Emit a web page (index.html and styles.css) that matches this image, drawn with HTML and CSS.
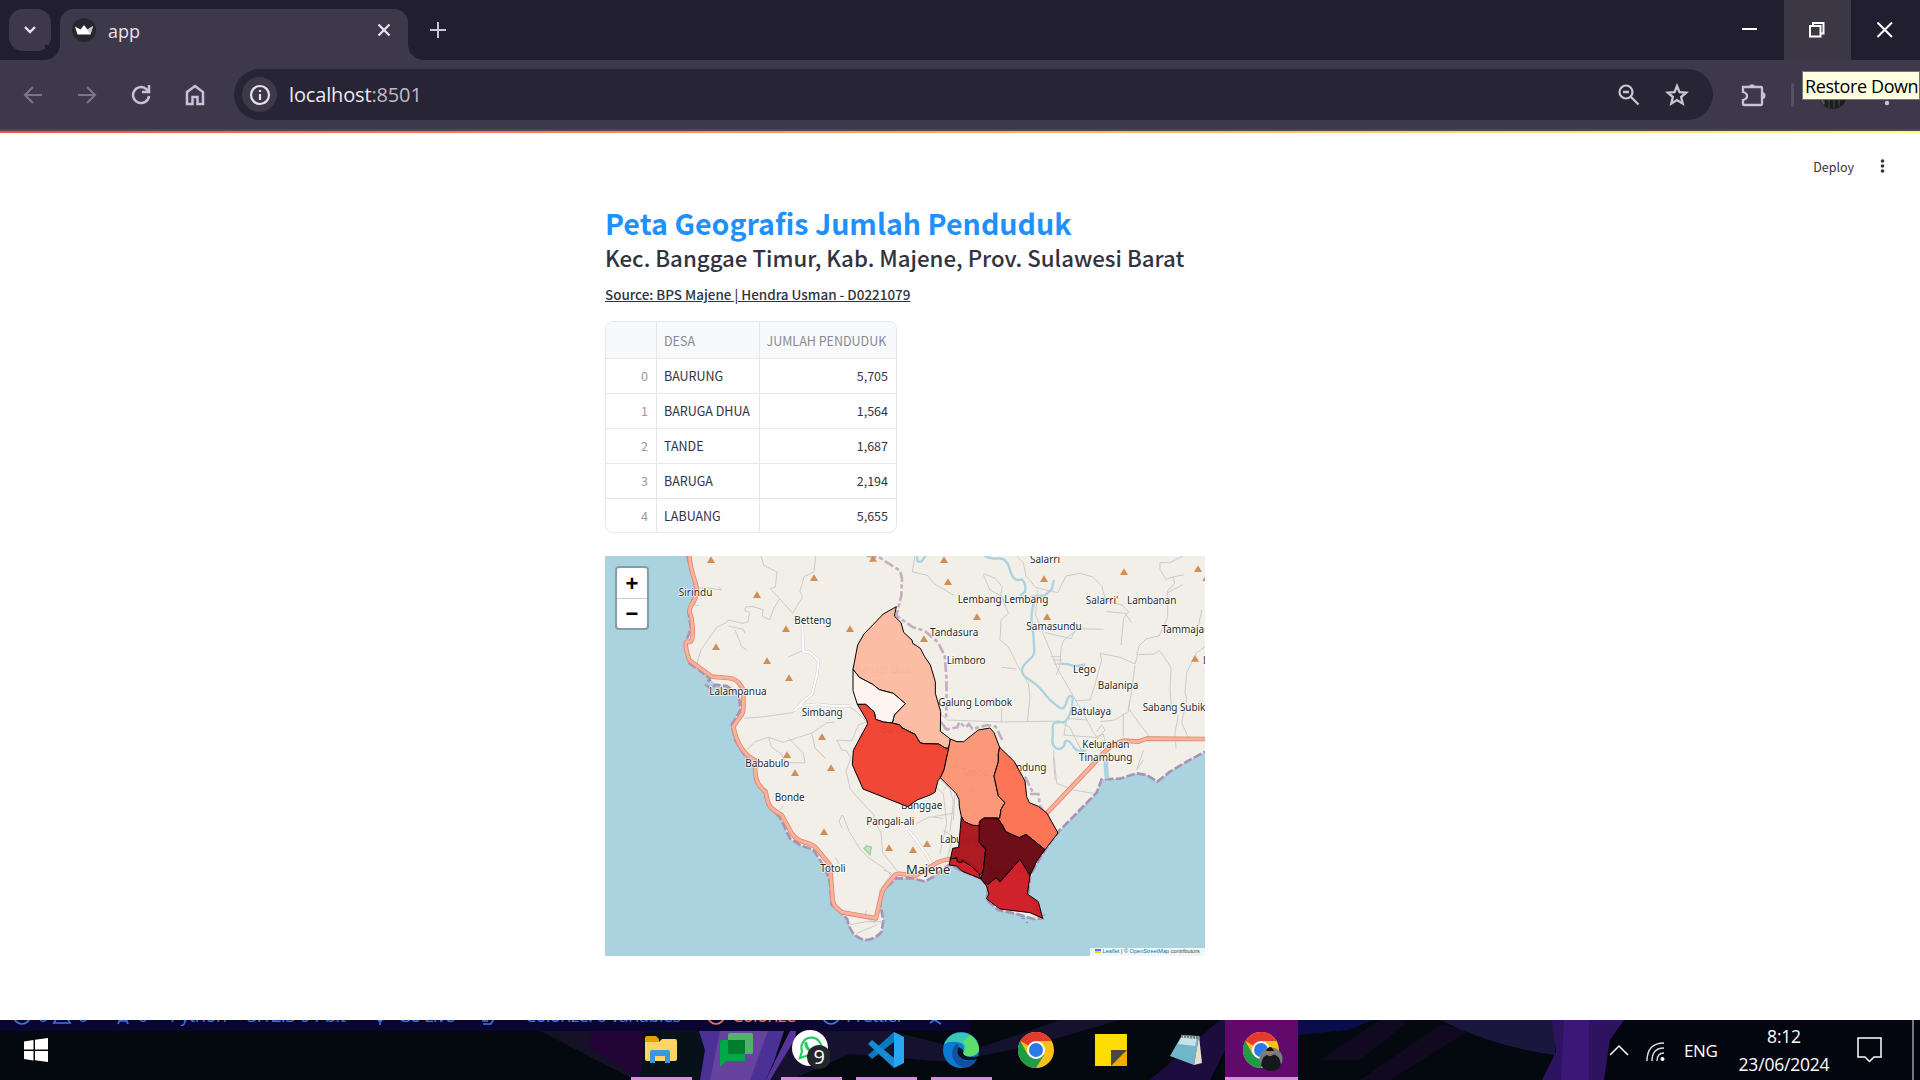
FILE: index.html
```html
<!DOCTYPE html>
<html lang="id">
<head>
<meta charset="utf-8">
<title>app</title>
<link rel="stylesheet" href="styles.css">
</head>
<body>
<header class="tabbar">
  <div class="tab-search"><svg width="14" height="10" viewBox="0 0 14 10"><path d="M2 2l5 5 5-5" fill="none" stroke="#e8e1ee" stroke-width="2.4"/></svg></div>
  <div class="tab">
    <svg class="favicon" width="24" height="24" viewBox="0 0 24 24"><circle cx="12" cy="12" r="12" fill="#26272e"/><path d="M3 8.5l5.500 3L12 7l3.500 4.500L21 8l-2.500 8.500H5.500z" fill="#fff"/><path d="M12 7l3.500 4.500L21 8l-2.500 8.500z" fill="#c8c8c8"/></svg>
    <span class="tab-title">app</span>
    <svg width="14" height="14" viewBox="0 0 14 14"><path d="M1.500 1.500l11 11m0-11l-11 11" stroke="#eae4f0" stroke-width="2.2"/></svg>
  </div>
  <svg class="new-tab" width="16" height="16" viewBox="0 0 16 16"><path d="M8 0v16M0 8h16" stroke="#cbc3dc" stroke-width="2"/></svg>
  <div class="window-buttons">
    <div class="window-button"><svg width="16" height="16" viewBox="0 0 16 16"><path d="M0 7h15" stroke="#fff" stroke-width="2"/></svg></div>
    <div class="window-button hovered"><svg width="16" height="16" viewBox="0 0 16 16"><path d="M1 4h10.500v10.500H1zM4 4V1h10.500v10.500h-3" fill="none" stroke="#fff" stroke-width="2"/></svg></div>
    <div class="window-button"><svg width="16" height="16" viewBox="0 0 16 16"><path d="M.5.500l14.500 14.500m0-14.500L.5 15" stroke="#fff" stroke-width="2"/></svg></div>
  </div>
</header>
<nav class="toolbar">
  <div class="nav-icons">
    <svg width="20" height="20" viewBox="0 0 20 20"><path class="dim" d="M19 10H2m8-8l-8 8 8 8"/></svg>
    <svg width="20" height="20" viewBox="0 0 20 20"><path class="dim" d="M1 10h17m-8-8l8 8-8 8"/></svg>
    <svg width="20" height="20" viewBox="0 0 20 20"><path class="lit" d="M18 11a8 8 0 1 1-2.300-6.600L18 6.500M18 0v7h-7"/></svg>
    <svg width="20" height="22" viewBox="0 0 20 22"><path class="lit" d="M2 8l8-6 8 6v12h-5.500v-7h-5v7H2z"/></svg>
  </div>
  <div class="omnibox">
    <div class="site-info"><svg width="22" height="22" viewBox="0 0 22 22"><circle cx="11" cy="11" r="9" fill="none" stroke="#e7e1ee" stroke-width="2.200"/><path d="M11 10v6M11 6v2" stroke="#e7e1ee" stroke-width="2.200"/></svg></div>
    <div class="url">localhost<span>:8501</span></div>
    <svg class="zoom-icon" width="22" height="22" viewBox="0 0 22 22"><path d="M5 8h6M12.500 12.500l8 8" fill="none" stroke="#cbc5cf" stroke-width="2.300"/><circle cx="8" cy="8" r="6.500" fill="none" stroke="#cbc5cf" stroke-width="2.200"/></svg>
    <svg width="24" height="24" viewBox="0 0 24 24"><path d="M12 3l2.500 6.200 6.700.5-5.100 4.300 1.600 6.600-5.700-3.600-5.700 3.600 1.600-6.600-5.100-4.300 6.700-.5z" fill="none" stroke="#cbc5cf" stroke-width="2.300"/></svg>
  </div>
  <svg class="puzzle" width="26" height="26" viewBox="0 0 26 26"><path d="M3 5h18q1 0 1 1v16q0 1-1 1H4q-1 0-1-1v-4q4-1 4-4t-4-4z" fill="none" stroke="#c9c0dc" stroke-width="2.300"/><path d="M9 4a3.500 3.500 0 0 1 6 0zM22 10a3.500 3.500 0 0 1 0 7z" fill="#c9c0dc"/></svg>
  <i class="divider"></i>
  <svg class="avatar" width="28" height="28" viewBox="0 0 28 28"><circle cx="14" cy="14" r="14" fill="#1c1f1e"/><path d="M5 17v7M10 17v10M15 17v10M20 17v8" stroke="#3f4744" stroke-width="1.200"/><path d="M1 16l4 7" stroke="#566048" stroke-width="2"/></svg>
  <svg class="menu-dots" width="6" height="22" viewBox="0 0 6 22"><g fill="#cbc3dc"><circle cx="3" cy="3" r="2.200"/><circle cx="3" cy="11" r="2.200"/><circle cx="3" cy="19" r="2.200"/></g></svg>
  <div class="tooltip">Restore Down</div>
</nav>
<main class="app">
  <div class="app-actions"><span>Deploy</span><svg width="5" height="14" viewBox="0 0 5 14"><g fill="#31333f"><circle cx="2.500" cy="2" r="1.800"/><circle cx="2.500" cy="7" r="1.800"/><circle cx="2.500" cy="12" r="1.800"/></g></svg></div>
  <section class="content">
    <h1>Peta Geografis Jumlah Penduduk</h1>
    <h2>Kec. Banggae Timur, Kab. Majene, Prov. Sulawesi Barat</h2>
    <p class="source">Source: BPS Majene | Hendra Usman - D0221079</p>
    <div class="table-frame"><table>
      <tr><th></th><th>DESA</th><th>JUMLAH PENDUDUK</th></tr>
      <tr><td>0</td><td>BAURUNG</td><td>5,705</td></tr>
      <tr><td>1</td><td>BARUGA DHUA</td><td>1,564</td></tr>
      <tr><td>2</td><td>TANDE</td><td>1,687</td></tr>
      <tr><td>3</td><td>BARUGA</td><td>2,194</td></tr>
      <tr><td>4</td><td>LABUANG</td><td>5,655</td></tr>
    </table></div>
    <div class="map">
      <svg width="600" height="400" viewBox="15 18 1800 1200">
        <defs>
          <path id="peak" d="M0-11L12 9H-12z" fill="#d08f55"/>
          <path id="coast" d="M262 18L272 60 285 100 278 150 265 185 273 235 258 275 262 320 268 340 300 362 330 385 318 405 335 418 345 404 380 408 415 430 422 480 395 525 405 570 430 610 466 655 468 695 490 720 505 768 540 802 570 866 600 885 640 900 676 955 690 1000 695 1065 725 1090 742 1108Q748 1140 765 1155T800 1170Q830 1165 845 1145L850 1110 840 1060 850 1020 890 985 940 985 975 995 1000 980 1050 942 1080 960 1140 985 1165 1010 1160 1050 1195 1080 1250 1092 1300 1107 1327 1105 1285 1035 1290 975 1335 900 1375 845 1420 800 1490 728 1505 688 1560 686 1610 670 1640 675 1672 695 1710 665 1760 635 1815 605"/>
          <path id="trunk" d="M268 18Q270 40 275 60T288 105 280 155 270 190 278 240 264 275 268 330L335 380 385 384Q405 386 415 397T430 420V475Q430 490 420 502T400 530Q408 570 425 595T466 632Q464 670 470 690T497 725Q503 765 515 775T545 795L575 850Q585 865 600 872L630 882Q640 886 650 896L690 945 698 1050Q700 1065 712 1075T725 1087L828 1105 845 1030Q850 1015 860 1005L885 975Q890 970 905 972L945 978 1000 945Q1020 930 1055 927M1340 790L1430 695 1520 600Q1540 580 1570 572L1615 575 1640 566 1815 567"/>
        </defs>
        <rect x="15" y="18" width="1800" height="1200" fill="#aad3df"/>
        <path d="M262 18L272 60 285 100 278 150 265 185 273 235 258 275 262 320 268 340 300 362 330 385 345 404 380 408 415 430 422 480 395 525 405 570 430 610 466 655 468 695 490 720 505 768 540 802 570 866 600 885 640 900 676 955 690 1000 695 1065 725 1090 742 1108Q748 1140 765 1155T800 1170Q830 1165 845 1145L850 1110 840 1060 850 1020 890 985 940 985 975 995 1000 980 1050 942 1080 960 1140 985 1165 1010 1160 1050 1195 1080 1250 1092 1300 1107 1327 1105 1285 1035 1290 975 1335 900 1375 845 1420 800 1490 728 1505 688 1560 686 1610 670 1640 675 1672 695 1710 665 1760 635 1815 605V18z" fill="#f2efe9"/>
        <use href="#coast" fill="none" stroke="#a993b4" stroke-width="8" stroke-dasharray="26 7"/>
        <g class="lanes">
          <path d="M483 18l8 28 40 20-5 45-15 5 28 30-18 30-12 33-22-10 2-20-30-9-22 0-3 12 15 5-5 28-15 5-45-10-5 8-28 13-35 50-13 18-11 37 3 40 25 30M538 145l40 45 30-50-8-15 12-45 30-15 5-45 10-12M290 115l35-1 40 6-10-10M290 140l-7 25 15 2M385 228l45 10 5 12M405 240l10 25 10 25 15 10M605 303l-40 18M433 505l60-5 85-12 25-22M440 600l25-25 40-13 45 15 85-28 45-30 25-3M635 549l10 45 30 30M505 562l10 30 30 20 10 25 60 2-5-30-30-30-15-15M740 465l30 20 30 30-25 10-20 48-45-3 15 30 15 3 13 20-15 40 13 55 45 50 25 25 2 20 20 35 5 60 60 75M725 795l-8 20 10 20M728 795l20 50 30 50 30 30 45 30 30 30M540 780l10-14M706 922l12 20M850 960l25 10-35 50-10 85M800 1080l-8 20 35 20M745 1125l55-10 50 0M770 1150l60-25"/>
          <path d="M945 18l-8 48 45 10 20 25 60 35M1150 75l20 45 37 20 10 30M1250 18l20 20 8 40 30 35 65 15 25-50 40-8 40 10 28 30 10 40 50 15 20 20-15 20-8 80M1312 120l-5 75 20 50 25 60 20 50 55 95 50 90M1205 140l20 50-22 20-3 60 25 20 30 60 30 50 5 40-8 75M1150 70l35 15 22 25-5 27M1335 248l78 18 15-30 82 2M1430 240l-38 30-8 20-5 60-10 25M1352 320h30M1360 330h28M1362 342h20M1500 310l60 12 45 20 8-28 50-2 15-10 15 20 20 30-3 70 5 55 20 20-10 50 3 50M1605 345l-10 80-10 50 25 35 35 45 5 15M1500 310l5 20-25 90-10 30-45 2M1520 185l55 5 20 28M1400 505l60 5M1400 505l-8 50 100 8M1750 18l-40 20 -30 0 0 20 18 30 22-8M1720 80l3 22-20 20 0 80-25 55-40 10-20 20-8 28M1700 130l50-27M1720 80l30-5M1805 180l-10 50M1815 290l-25 18-15 30-15 30-5 60 5 20-15 70 20 45M1040 510l170 6 170-3 30 20 50 100M1020 490l20 18M1205 516v-40M1205 352l45 5M1360 600l10 100 50 20 60 10M1630 600l-20 60 20-30M1570 490v70M1500 600l30 30 70 0M1360 620l5 70M1590 450l-5 35-40 25-45 5"/>
          <path d="M1020 690l30 25 10 40-10 90M1030 720l15-15 20 15-5 90M990 700l40 30 10 90-20 90M1000 800l60-10M950 820l40-20 40 5M1030 840l30 20-20 70M1475 540l15 20 20-8 5 20-35 8M1490 545l15-20 10 15-25 30"/>
        </g>
        <g class="streets"><path d="M607 223l3 82 18 0 28 28-5 40-15 60-25 20-28 30M583 483l15-15 55-5 45 5h50M925 840l20 25 35 50 20 35" stroke="#ccc" stroke-width="9"/><path d="M607 223l3 82 18 0 28 28-5 40-15 60-25 20-28 30M583 483l15-15 55-5 45 5h50M925 840l20 25 35 50 20 35" stroke="#fff" stroke-width="6"/></g>
        <g class="rivers"><path d="M950 18l4 17 10 0 12-17M1155 18Q1170 28 1195 25T1230 60 1265 88Q1280 100 1275 125L1262 137M1307 140Q1290 190 1296 225T1303 300C1305 330 1270 330 1266 360 1264 385 1300 390 1320 415L1350 450C1380 475 1390 490 1400 455 1405 430 1420 435 1418 450 1416 475 1412 500 1395 515 1375 520 1360 510 1358 530 1362 560 1350 580 1365 592 1380 605 1395 590 1395 575 1400 565 1415 580 1420 590L1430 601 1455 602"/><path d="M1452 344Q1425 352 1405 343L1385 341M1295 140l40-4 20-18 6-25"/><path d="M1517 635l3 45" stroke-width="14"/></g>
        <g class="border"><path d="M800 18l38 4 30 20 32 20 6 25-2 50-15 60 50 35 35 10 40 35 20 40 5 60 1 80-2 50"/><path d="M1022 515l15 20-5 5 40-8 5-15 20 15 10-10 10 15 45-12 25 5 20 40M1275 680l25 50M1290 732h25l5 35 20 30"/></g>
        <path d="M792 895l8-8 14 4-2 10-2 14-8-10z" fill="#c8e0c2" stroke="#9cd09c" stroke-width="4"/>
        <use class="highway-case" href="#trunk"/><use class="highway" href="#trunk"/>
        <g class="peaks">
          <use href="#peak" x="333" y="30"/><use href="#peak" x="471" y="135"/><use href="#peak" x="642" y="84"/><use href="#peak" x="819" y="26"/><use href="#peak" x="558" y="237"/><use href="#peak" x="750" y="237"/><use href="#peak" x="348" y="291"/><use href="#peak" x="501" y="333"/><use href="#peak" x="567" y="384"/><use href="#peak" x="666" y="561"/><use href="#peak" x="561" y="615"/><use href="#peak" x="585" y="669"/><use href="#peak" x="693" y="654"/><use href="#peak" x="672" y="846"/><use href="#peak" x="867" y="894"/><use href="#peak" x="939" y="900"/><use href="#peak" x="981" y="882"/><use href="#peak" x="1032" y="30"/><use href="#peak" x="1044" y="96"/><use href="#peak" x="1131" y="201"/><use href="#peak" x="1332" y="87"/><use href="#peak" x="1341" y="201"/><use href="#peak" x="1572" y="66"/><use href="#peak" x="1794" y="57"/><use href="#peak" x="1785" y="326"/><use href="#peak" x="972" y="267"/><use href="#peak" x="1819" y="84"/><use href="#peak" x="1068" y="648"/><use href="#peak" x="1116" y="720"/><use href="#peak" x="1125" y="794"/><use href="#peak" x="1182" y="778"/>
        </g>
        <g class="labels">
          <text x="236" y="139" textLength="101">Sirindu</text><text x="583" y="223" textLength="111">Betteng</text><text x="328" y="436" textLength="172">Lalampanua</text><text x="605" y="497" textLength="123">Simbang</text><text x="436" y="652" textLength="132">Bababulo</text><text x="524" y="753" textLength="90">Bonde</text><text x="799" y="826" textLength="144">Pangali-ali</text><text x="661" y="966" textLength="76">Totoli</text><text x="903" y="777" textLength="124">Banggae</text><text x="1020" y="880" textLength="118">Labuang</text><text x="1168" y="973" textLength="127">Baurung</text><text x="1083" y="679" textLength="82">Tande</text><text x="1218" y="662" textLength="121">Tandung</text><text x="842" y="548" textLength="100">Baruga</text><text x="765" y="370" textLength="165">Baruga Dua</text>
          <text x="1290" y="40" textLength="90">Salarri</text><text x="1073" y="158" textLength="272">Lembang Lembang</text><text x="1457" y="163" textLength="98">Salarri'</text><text x="1581" y="163" textLength="148">Lambanan</text><text x="1279" y="239" textLength="166">Samasundu</text><text x="990" y="259" textLength="145">Tandasura</text><text x="1040" y="342" textLength="117">Limboro</text><text x="1419" y="369" textLength="69">Lego</text><text x="1493" y="417" textLength="122">Balanipa</text><text x="1015" y="467" textLength="221">Galung Lombok</text><text x="1412" y="495" textLength="121">Batulaya</text><text x="1628" y="482" textLength="188">Sabang Subik</text><text x="1685" y="248" textLength="127">Tammaja</text><text x="1447" y="595" textLength="141">Kelurahan</text><text x="1437" y="634" textLength="160">Tinambung</text><text x="1809" y="342">L</text>
          <text class="town" x="918" y="971" textLength="133">Majene</text>
        </g>
        <g class="regions" transform="translate(660 120)">
          <path fill="#fcbba1" d="M229 50L190 72 132 132 113 165 99 238 118 262 158 283 178 299 220 310 256 341 223 375 217 399 240 405 245 413 285 433 300 458 312 461 356 462 375 474 386 475 391 447 361 424 362 365 346 310 346 275 331 225 314 200 301 175 278 160 276 150 251 127 243 98 223 78z"/>
          <path fill="#fff5f0" d="M99 238L118 262 158 283 178 299 220 310 256 341 223 375 217 399 190 396 167 388 163 366 137 343 112 343 99 302z"/>
          <path fill="#f14130" d="M112 343L137 343 163 366 167 388 190 396 217 399 240 405 245 413 285 433 300 458 312 461 356 462 375 474 386 475 372 540 361 563 354 572 345 607 330 615 291 630 263 650 129 597 97 524 100 481 143 401 140 390z"/>
          <path fill="#fc9576" d="M391 447L411 455 431 455 475 420 510 414 522 428 539 472 535 490 535 515 522 558 535 618 555 638 543 658 539 685 527 684 492 684 480 692 477 707 458 706 433 695 424 680 418 650 417 628 408 610 361 563 372 540 386 475z"/>
          <path fill="#fb7151" d="M539 472L583 515 615 573 620 620 628 638 655 649 681 670 714 729 675 779 618 733 598 743 560 731 548 705 527 684 539 685 543 658 555 638 535 618 522 558 535 515 535 490z"/>
          <path fill="#cc1b23" d="M388 825L391 805 408 805 410 803 425 806 450 815 474 838 482 866 425 843 410 828z"/>
          <path fill="#ac141b" d="M424 680L433 695 458 706 478 707 478 757 497 778 490 840 480 856 465 838 450 826 426 811 425 818 412 815 410 803 391 808 398 775 416 772z"/>
          <path fill="#690612" d="M492 684L527 684 538 690 556 724 598 743 618 733 675 779 650 814 630 857 600 808 540 876 529 863 499 887 482 866 490 840 497 778 478 757 478 696z"/>
          <path fill="#ce1b24" d="M600 808L630 857 622 912 655 935 668 985 630 968 540 957 499 926 507 912 499 887 529 863 540 876z"/>
        </g>
        <path d="M1263 1105h12M1278 1117h6M1330 1095h6M325 391h8" stroke="#3b9cf0" stroke-width="3"/>
      </svg>
      <div class="zoom-control"><span>+</span><span>−</span></div>
      <div class="attribution"><svg width="6" height="4" viewBox="0 0 6 4"><path fill="#4c7be1" d="M0 0h6v2H0z"/><path fill="#ffd500" d="M0 2h6v2H0z"/></svg> <a>Leaflet</a> | © <a>OpenStreetMap</a> contributors</div>
    </div>
  </section>
</main>
<footer class="taskbar">
  <svg class="wallpaper" width="1920" height="60" viewBox="0 0 1920 60" preserveAspectRatio="none">
    <rect width="1920" height="60" fill="#040910"/>
    <path d="M540 11h160v18l-35 31h-30z" fill="#141026"/><path d="M590 11h110v49h-58l-20-12-32-20z" fill="#220536"/><path d="M645 11h60v49h-65z" fill="#07111a"/>
    <path d="M699 11h85l-10 30-8 19h-66l5-30z" fill="#4b3196"/><path d="M720 11h48l-18 49h-40z" fill="#65439f"/><path d="M796 11h-6l-12 24-12 25h15l12-20z" fill="#56349a"/>
    <path d="M800 11h90l80 20 90-31h60l-90 26-80 16-100-8-60 26h-20z" fill="#15112e"/><path d="M1220 0l-70 60h60l15-30V0z" fill="#1d0c3e"/><path d="M1298 0h75l-25 10-50 5z" fill="#0b0c4b"/>
    <path d="M1380 0l-60 40h40l50-40zM1440 5l-80 55h30l80-50z" fill="#10091f"/><path d="M1440 0h115v35q-60-8-115-35z" fill="#1a173f"/><path d="M1552 0h74l-16 20-6 40h-62l14-28z" fill="#2d1360"/><path d="M1564 0h25v60h-28z" fill="#3b1878"/>
    <path d="M1624 0h296v60h-315l5-40z" fill="#03060f"/>
  </svg>
  <div class="statusbar">
    <svg width="971" height="11" viewBox="0 0 971 11"><rect width="971" height="11" fill="#0b0532"/><g fill="none" stroke="#3978df" stroke-width="1.700"><circle cx="22" cy="-4" r="8"/><path d="M54 3l8-14 8 14zM118 4l5-12 5 12M119 1h8M380-8v13M377-2l3 4 4-4M483 4h8l4-7M482 1l6 0"/><circle cx="831" cy="-4" r="8"/><path d="M930 3l12-9M933-1l8 5"/></g><circle cx="716" cy="-4" r="8" fill="none" stroke="#ee7064" stroke-width="1.700"/>
      <g class="status-text"><text x="38" y="2">0</text><text x="78" y="2">0</text><text x="138" y="2">0</text><text x="170" y="2" textLength="57">Python</text><text x="247" y="2" textLength="99">3.12.3 64-bit</text><text x="398" y="2" textLength="57">Go Live</text><text x="525" y="2" textLength="156">Colorize: 0 variables</text><text class="warm" x="732" y="2" textLength="64">Colorize</text><text x="846" y="2" textLength="58">Prettier</text></g>
    </svg>
  </div>
  <svg class="start" width="24" height="24" viewBox="0 0 24 24"><path d="M0 3.500L9.500 2v9.500H0zM11 1.800L24 0v11.500H11zM0 13h9.500v9.500L0 21zM11 13h13v11l-13-1.800z" fill="#fff"/></svg>
  <div class="tasks">
    <div class="task open"><svg width="32" height="28" viewBox="0 0 32 28"><path d="M0 2q0-2 2-2h9l3 3v4H0z" fill="#e1a100"/><path d="M0 6l14 0 3-3h13q2 0 2 2v18q0 2-2 2H2q-2 0-2-2z" fill="#ffd463"/><path d="M5 27V16q0-2 2-2h16q2 0 2 2v11h-5v-7H10v7z" fill="#3a99dd"/></svg></div>
    <div class="task"><svg width="34" height="34" viewBox="0 0 34 34"><rect x="9" width="25" height="21" rx="2" fill="#55b06d"/><path d="M1 9q0-2 2-2h23v21H7l-6 6z" fill="#00a846"/><path d="M9 7h17v14H11q-2 0-2-2z" fill="#007f2e"/></svg></div>
    <div class="task open"><svg width="38" height="40" viewBox="0 0 38 40"><circle cx="18" cy="18" r="18" fill="#fff"/><path d="M8 28l2-7a10 10 0 1 1 4 5z" fill="none" stroke="#23cf63" stroke-width="2.200"/><path d="M14 12q-1 8 9 10" stroke="#23cf63" stroke-width="3" fill="none"/><circle cx="27" cy="27" r="12" fill="#25262b"/><text x="21.500" y="34" class="badge">9</text></svg></div>
    <div class="task open"><svg width="36" height="36" viewBox="0 0 36 36"><path d="M26 0v10L4 27l-4-4z" fill="#0a78bd"/><path d="M0 12l4-4 22 18v10z" fill="#168bd4"/><path d="M26 0l10 5v26l-10 5z" fill="#25a7f2"/></svg></div>
    <div class="task open"><svg width="36" height="36" viewBox="0 0 36 36"><circle cx="18" cy="18" r="18" fill="#087bd0"/><path d="M1 13C5-2 26-4 34 9q5 12-5 15-8 1-9-3 4-10-6-11T1 13z" fill="#3bc6b8"/><path d="M27 3q10 8 9 16-3 7-15 5l-1-3q6-6 0-11z" fill="#5ddd69"/><path d="M13 12q-9 12 3 22 12 5 18-7-10 5-17-2-5-6-1-12z" fill="#11509f"/><path d="M15 15q-3 10 8 13 7 1 11-1l2-3q-14 3-16-3 2-4-5-6z" fill="#061421"/></svg></div>
    <div class="task"><svg width="36" height="36" viewBox="0 0 36 36"><g id="chrome"><circle cx="18" cy="18" r="18" fill="#fbc116"/><path d="M2.400 9A18 18 0 0 1 33.600 9H18z" fill="#e33b2e"/><path d="M2.400 9A18 18 0 0 0 18 36l8-13-16 0z" fill="#229b48"/><path d="M2.400 9H18v9z" fill="#e33b2e"/><circle cx="18" cy="18" r="9" fill="#fff"/><circle cx="18" cy="18" r="7" fill="#287be9"/></g></svg></div>
    <div class="task"><svg width="32" height="32" viewBox="0 0 32 32"><path d="M0 0h32v16L16 32H0z" fill="#ffdd00"/><path d="M16 32V16h16z" fill="#484848"/><path d="M32 16v16H16z" fill="#f4aa00"/></svg></div>
    <div class="task"><svg width="34" height="32" viewBox="0 0 34 32"><path d="M13 1l17 1-5 29L1 22z" fill="#6fb6c8"/><path d="M13 2l15 1-2 9-17-2z" fill="#c6e3e8"/><path d="M30 2l3 27-8 2z" fill="#e7e0cf"/><path d="M12 2l19 2" stroke="#777" stroke-width="3" stroke-dasharray="2 1"/></svg></div>
    <div class="task open current"><svg width="40" height="40" viewBox="0 0 40 40"><use href="#chrome"/><circle cx="28" cy="27" r="11.500" fill="#777d7c"/><path d="M18 33q1-11 10-11t10 11q-3 6-10 6t-10-6z" fill="#15181d"/><circle cx="27" cy="20" r="4" fill="#90786b"/><path d="M23 19q4-8 8 0z" fill="#111"/></svg></div>
  </div>
  <div class="tray">
    <svg width="20" height="12" viewBox="0 0 20 12"><path d="M1 11l9-9 9 9" fill="none" stroke="#fff" stroke-width="1.500"/></svg>
    <svg class="wifi" width="20" height="20" viewBox="0 0 20 20"><g fill="none" stroke="#ddd" stroke-width="1.400"><path d="M1 19Q1 1 18 1M6 19Q6 6 18 6M11 19q0-8 7-8"/></g><circle cx="16.500" cy="17" r="2" fill="#fff"/></svg>
    <span class="lang">ENG</span>
    <div class="clock"><span>8:12</span><span>23/06/2024</span></div>
    <svg class="notice" width="26" height="26" viewBox="0 0 26 26"><path d="M1 1h23v19h-7l-4.500 4.500L8 20H1z" fill="none" stroke="#fff" stroke-width="1.500"/></svg>
    <i class="peek"></i>
  </div>
</footer>
</body>
</html>
```
FILE: styles.css
```css
* { box-sizing: border-box; }
body { margin: 0; width: 1920px; height: 1080px; overflow: hidden; display: flex; flex-direction: column; background: #fff; font-family: "Open Sans", "Noto Sans", sans-serif; }
svg { display: block; flex: none; }
.tabbar { height: 60px; background: #211e30; display: flex; align-items: center; flex: none; }
.tab-search { width: 42px; height: 42px; margin-left: 9px; border-radius: 14px; background: #3d394b; display: flex; align-items: center; justify-content: center; }
.tab { position: relative; align-self: flex-end; width: 348px; height: 51px; margin-left: 9px; padding: 0 17px 9px 12px; border-radius: 14px 14px 0 0; background: #3d394b; display: flex; align-items: center; color: #e8e1ee; }
.tab::before, .tab::after { content: ""; position: absolute; bottom: 0; width: 15px; height: 15px; }
.tab::before { left: -15px; background: radial-gradient(circle at 0 0, #211e30 14.5px, #3d394b 15px); }
.tab::after { right: -15px; background: radial-gradient(circle at 100% 0, #211e30 14.5px, #3d394b 15px); }
.tab-title { flex: 1; margin: 2px 0 0 12px; font: 18px/24px "Open Sans", sans-serif; }
.new-tab { margin-left: 22px; }
.window-buttons { margin-left: auto; display: flex; align-self: stretch; }
.window-button { width: 69px; display: flex; align-items: center; justify-content: center; }
.window-button.hovered { width: 67px; background: #3b3745; }
.window-button.hovered svg { margin-right: 2px; }
.window-button:last-child { padding-right: 1px; }
.toolbar { position: relative; height: 71px; flex: none; background: #3d394b; display: flex; align-items: center; border-bottom: 2px solid #4b4850; }
.nav-icons { width: 234px; padding-left: 23px; display: flex; gap: 34px; align-items: center; }
.dim, .lit { fill: none; stroke: #7b758a; stroke-width: 2.200; }
.lit { stroke: #c9c0dc; stroke-width: 2.500; }
.omnibox { width: 1479px; height: 51px; border-radius: 26px; background: #272436; display: flex; align-items: center; padding: 0 24px 0 8px; }
.site-info { width: 35px; height: 35px; border-radius: 50%; background: #3d394b; display: flex; align-items: center; justify-content: center; }
.url { margin-left: 12px; flex: 1; font: 20px/28px "Open Sans", sans-serif; letter-spacing: -.15px; color: #eee8f2; }
.url span { color: #c0bac6; }
.zoom-icon { margin-right: 25px; }
.puzzle { margin-left: 27px; }
.divider { width: 3px; height: 24px; border-radius: 2px; background: #55505f; margin-left: 25px; }
.avatar { margin-left: 25px; }
.menu-dots { margin-left: 37px; }
.tooltip { position: absolute; right: 0; top: 11px; width: 118px; height: 29px; background: #ffffe1; border: 1px solid #777; color: #000; font: 18px/28px "Open Sans", sans-serif; white-space: nowrap; padding-left: 2px; letter-spacing: -.4px; }
.app { height: 889px; flex: none; background: #fff; border-top: 2px solid; border-image: linear-gradient(90deg, #ff4b4b, #fffd80) 1; font-family: "Noto Sans CJK SC", "Noto Sans", sans-serif; color: #31333f; display: flex; flex-direction: column; }
.app-actions { height: 68px; padding: 0 35px 2px 0; display: flex; align-items: center; justify-content: flex-end; gap: 26px; font-size: 12.500px; }
.content { width: 600px; margin: 0 0 0 605px; }
h1, h2, p { margin: 0; white-space: nowrap; }
h1 { height: 40px; font-size: 28.600px; line-height: 43px; font-weight: 700; color: #1e90ff; }
h2 { height: 34px; font-size: 22.250px; line-height: 33px; font-weight: 500; }
.source { height: 46px; font-size: 13.450px; line-height: 38px; font-weight: 500; text-decoration: underline; }
.table-frame { width: 292px; height: 212px; border: 1px solid #e6e7e9; border-radius: 8px; overflow: hidden; }
table { border-collapse: collapse; table-layout: fixed; width: 291px; font-size: 12.500px; line-height: 20px; }
tr { height: 35px; }
th { height: 36px; background: #f8f9fb; color: #888a92; font-weight: 400; text-align: left; }
th, td { padding: 0 7.500px; border-right: 1px solid #e6e7e9; border-bottom: 1px solid #e6e7e9; white-space: nowrap; }
th:first-child { width: 50px; } th:nth-child(2) { width: 103px; } th:last-child { padding: 2px 7px 0; } th:nth-child(2) { padding-top: 2px; }
td:first-child { color: #9a9ba1; text-align: right; } td:last-child { text-align: right; padding-right: 8px; }
.map { position: relative; width: 600px; height: 400px; margin-top: 23px; overflow: hidden; }
.lanes { fill: none; stroke: #c6c6c8; stroke-width: 2.700; stroke-linejoin: round; }
.streets { fill: none; stroke-linejoin: round; }
.rivers { fill: none; stroke: #aad3df; stroke-width: 7; stroke-linejoin: round; stroke-linecap: round; }
.border { fill: none; stroke: #c5aebf; stroke-width: 8; stroke-dasharray: 30 8 12 8; }
.highway, .highway-case { fill: none; stroke: #f9b29c; stroke-width: 9; stroke-linejoin: round; }
.highway-case { stroke: #e2856f; stroke-width: 14; }
.labels { font: 30px "Noto Sans", sans-serif; fill: #282828; stroke: #fff; stroke-width: 5; stroke-opacity: .8; paint-order: stroke; stroke-linejoin: round; }
.labels .town { font-size: 39px; }
.regions { stroke: #000; stroke-width: 3; stroke-linejoin: round; fill-opacity: .97; }
.zoom-control { position: absolute; left: 10px; top: 10px; width: 34px; height: 64px; border: 2px solid #829fa8; border-radius: 4px; background: #fff; color: #000; font: bold 22px/30px "Liberation Sans", sans-serif; text-align: center; display: flex; flex-direction: column; }
.zoom-control span { height: 30px; }
.zoom-control span:first-child { height: 31px; border-bottom: 1px solid #ccc; line-height: 32px; }
.attribution { position: absolute; right: 0; bottom: 0; width: 115px; height: 8px; padding-left: 5px; background: rgba(255,255,255,.8); color: #444; font: 5.600px/7px "Liberation Sans", sans-serif; white-space: nowrap; }
.attribution svg { display: inline-block; } .attribution a { color: #0078a8; }
.taskbar { position: relative; height: 60px; flex: none; display: flex; align-items: center; color: #fff; background: #040910; }
.wallpaper { position: absolute; inset: 0; }
.statusbar { position: absolute; left: 0; top: 0; }
.status-text { font: 18px "Open Sans", sans-serif; fill: #3978df; } .status-text .warm { fill: #ee7064; }
.start { position: relative; margin-left: 24px; }
.tasks { position: relative; margin-left: 576px; display: flex; align-self: stretch; }
.task { position: relative; width: 75px; padding-right: 2px; display: flex; align-items: center; justify-content: center; }
.task.open::after { content: ""; position: absolute; left: 7px; right: 7px; bottom: 0; height: 3px; background: #d68fd9; }
.task.current { width: 73px; margin-left: 1px; padding: 4px 0 0 2px; background: #610a6c; } .task.current::after { left: 0; right: 0; }
.badge { font: 20px "Open Sans", sans-serif; fill: #fff; }
.tray { position: relative; margin-left: auto; height: 60px; display: flex; align-items: center; }
.wifi { margin: 4px 0 0 17px; }
.lang { margin-left: 18px; width: 34px; font-size: 17px; letter-spacing: -.4px; }
.clock { width: 96px; margin-left: 18px; display: flex; flex-direction: column; align-items: center; font-size: 17.500px; line-height: 28px; letter-spacing: -.2px; }
.notice { margin-left: 25px; }
.peek { width: 2px; height: 60px; background: #777; margin: 0 6px 0 29px; }
```
